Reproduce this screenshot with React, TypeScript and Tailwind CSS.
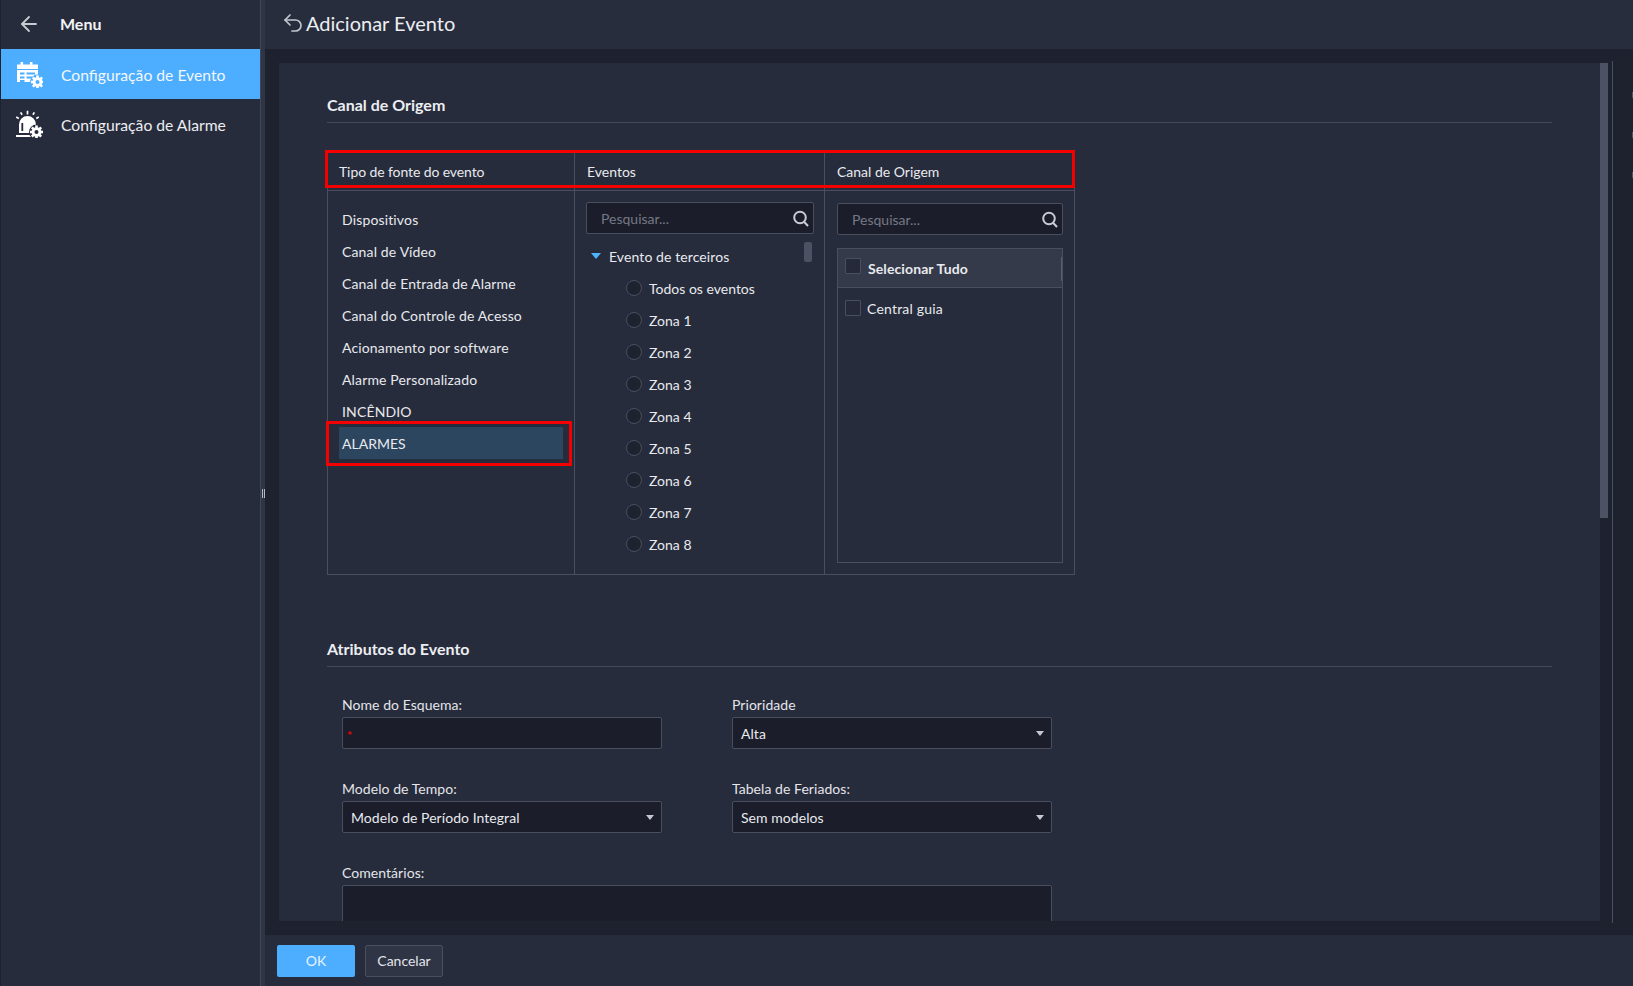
import React from 'react';
import { ArrowLeft, Undo2 } from 'lucide-react';

const sourceTypes = [
  'Dispositivos',
  'Canal de Vídeo',
  'Canal de Entrada de Alarme',
  'Canal do Controle de Acesso',
  'Acionamento por software',
  'Alarme Personalizado',
  'INCÊNDIO',
];

const events = ['Todos os eventos', 'Zona 1', 'Zona 2', 'Zona 3', 'Zona 4', 'Zona 5', 'Zona 6', 'Zona 7', 'Zona 8'];

const Gear = ({ cx, cy, bg }: { cx: number; cy: number; bg: string }) => (
  <g transform={`translate(${cx} ${cy})`}>
    <circle r="7.6" fill={bg} />
    <circle r="4.8" fill="#fff" />
    {[0, 45, 90, 135, 180, 225, 270, 315].map((a) => (
      <rect key={a} x="-1.3" y="-6.6" width="2.6" height="2.8" fill="#fff" transform={`rotate(${a})`} />
    ))}
    <circle r="2" fill={bg} />
  </g>
);

const EventConfigIcon = () => (
  <svg width="28" height="28" viewBox="0 0 28 28">
    <path fill="#fff" d="M2 4.5h3.5V2h2.6v2.5h6.8V2h2.6v2.5H23V9H2z" />
    <path fill="#fff" d="M2 10h21v12H2z" />
    <path fill="#4dadff" d="M5 12.6h4.5v2H5zM11.5 12.6H20v2h-8.5zM5 16.6h4.5v2H5zM11.5 16.6H17v2h-5.5zM5 20h4.5v2H5z" />
    <Gear cx={22.5} cy={22} bg="#4dadff" />
  </svg>
);

const AlarmConfigIcon = () => (
  <svg width="28" height="28" viewBox="0 0 28 28">
    <path fill="#fff" d="M4 23V14.5a8.5 8.5 0 0 1 17 0V23z" />
    <rect x="6.4" y="13" width="1.8" height="8" fill="#272c3c" />
    <rect x="1" y="25" width="16" height="2" fill="#fff" />
    <path stroke="#fff" strokeWidth="1.7" fill="none" d="M12.5 0.8v3.6M5.6 2.4l1.5 2.4M19.4 2.4l-1.5 2.4M1.2 7l2.6 1.4M23.8 7l-2.6 1.4" />
    <Gear cx={21.5} cy={22} bg="#272c3c" />
  </svg>
);

const SearchBox = () => (
  <div className="flex h-[32px] items-center justify-between rounded-[2px] border border-[#4a4f60] bg-[#1b1d2a] pl-[14px] pr-[4px]">
    <span className="text-[14px] text-[#757985]">Pesquisar...</span>
    <svg width="16" height="17" viewBox="0 0 16 17" fill="none" stroke="#c9ccd4" strokeWidth="2">
      <circle cx="7" cy="7.5" r="5.8" />
      <path d="M11 11.8l4 4.2" />
    </svg>
  </div>
);

const Checkbox = () => <span className="block h-[16px] w-[16px] rounded-[1px] border border-[#4a4f60] bg-[#252939]" />;

const Field = ({ label, value, required, select }: { label: string; value?: string; required?: boolean; select?: boolean }) => (
  <div className="flex flex-col">
    <label className="h-[22px] text-[14px] leading-[20px] tracking-[0.05px] text-[#e3e5ea]">{label}</label>
    <div className="flex h-[32px] items-center justify-between rounded-[2px] border border-[#4a4f60] bg-[#1b1d2a] pl-[8px] pr-[7px] text-[14px] tracking-[0.05px] text-[#e8eaee]">
      {required && <span className="-ml-[4px] mt-[6px] text-[12px] font-bold leading-none text-[#f00000]">*</span>}
      {value && <span>{value}</span>}
      {select && <span className="h-0 w-0 border-x-[4px] border-t-[5px] border-x-transparent border-t-[#c4c7d4]" />}
    </div>
  </div>
);

export default function App() {
  return (
    <div
      className="flex h-[986px] w-[1633px] overflow-hidden bg-[#1e222e] text-[#e8eaee]"
      style={{ fontFamily: 'Lato, "Liberation Sans", sans-serif' }}
    >
      {/* side menu */}
      <aside className="ml-[1px] w-[259px] shrink-0 bg-[#272c3c]">
        <div className="flex h-[49px] items-center pb-[1px] pl-[16px]">
          <ArrowLeft size={24} strokeWidth={1.8} className="text-[#c8cad2]" />
          <span className="ml-[19px] text-[16px] font-bold text-[#f2f3f5]">Menu</span>
        </div>
        <div className="flex h-[50px] items-center bg-[#4dadff] pl-[14px] text-[15.7px] text-[#f3f8fd]">
          <EventConfigIcon />
          <span className="ml-[18px] pt-[3px]">Configuração de Evento</span>
        </div>
        <div className="flex h-[50px] items-center pl-[14px] text-[15.7px] text-[#eceef2]">
          <AlarmConfigIcon />
          <span className="ml-[18px] pt-[3px]">Configuração de Alarme</span>
        </div>
      </aside>

      {/* splitter */}
      <div className="flex w-[5px] shrink-0 items-center justify-center gap-[1px] border-l border-[#41465a] bg-[#303546]">
        <span className="h-[9px] w-[1px] bg-[#b5b8c4]" />
        <span className="h-[9px] w-[1px] bg-[#b5b8c4]" />
      </div>

      <main className="flex min-w-0 flex-1 flex-col">
        <header className="flex h-[49px] shrink-0 items-center bg-[#282d3d] pb-[4px] pl-[16px]">
          <Undo2 size={24} strokeWidth={1.7} className="text-[#c3c6cf]" />
          <h1 className="ml-[1px] text-[20px] text-[#eceef2]">Adicionar Evento</h1>
        </header>

        <div className="flex min-h-0 flex-1 pb-[14px] pl-[14px] pt-[14px]">
          <div className="h-full w-[1321px] shrink-0 overflow-hidden bg-[#272c3c] px-[48px] pt-[29px]">
            <h2 className="flex h-[31px] items-center border-b border-[#454a5b] pb-[4px] text-[16px] font-bold text-[#eceef2]">
              Canal de Origem
            </h2>

            <div className="relative mt-[28px] flex h-[424px] w-[748px] border-x border-b border-[#4a4f60]">
              {/* highlight from the annotated capture */}
              <div className="absolute -left-[3px] -right-[1px] -top-[1px] h-[38px] border-[3px] border-[#f40000]" />

              <section className="w-[247px] shrink-0 border-r border-[#4a4f60]">
                <div className="flex h-[40px] items-center border-b border-[#4a4f60] pl-[11px] pt-[1px] text-[14px] tracking-[-0.1px]">Tipo de fonte do evento</div>
                <ul className="pt-[12px] text-[14px] tracking-[0.15px]">
                  {sourceTypes.map((name) => (
                    <li key={name} className="flex h-[32px] items-center pl-[14px]">{name}</li>
                  ))}
                </ul>
                <div className="relative mx-[11px] mt-0 flex h-[32px] items-center bg-[#2d4660] pl-[3px] text-[14px]">
                  <div className="absolute -bottom-[7px] -left-[13px] -right-[9px] -top-[6px] border-[3px] border-[#f40000]" />
                  ALARMES
                </div>
              </section>

              <section className="w-[250px] shrink-0 border-r border-[#4a4f60]">
                <div className="flex h-[40px] items-center border-b border-[#4a4f60] pl-[12px] pt-[1px] text-[14px]">Eventos</div>
                <div className="relative pl-[11px] pr-[10px] pt-[11px]">
                  <SearchBox />
                  <div className="absolute right-[12px] top-[51px] h-[20px] w-[8px] rounded-[2px] bg-[#4c5163]" />
                  <div className="flex h-[32px] items-center pl-[5px] pt-[12px] text-[14px]">
                    <span className="h-0 w-0 border-x-[5.5px] border-t-[6px] border-x-transparent border-t-[#4db5ff]" />
                    <span className="ml-[8px] tracking-[0.1px]">Evento de terceiros</span>
                  </div>
                  <ul className="mt-[6px] text-[14px]">
                    {events.map((name) => (
                      <li key={name} className="flex h-[32px] items-center pl-[40px]">
                        <span className="h-[16px] w-[16px] rounded-full border border-[#4a4f60] bg-[#1f2330]" />
                        <span className="ml-[7px]">{name}</span>
                      </li>
                    ))}
                  </ul>
                </div>
              </section>

              <section className="flex-1">
                <div className="flex h-[40px] items-center border-b border-[#4a4f60] pl-[12px] pt-[1px] text-[14px]">Canal de Origem</div>
                <div className="pl-[12px] pr-[11px] pt-[12px]">
                  <SearchBox />
                  <div className="relative mt-[13px] h-[315px] border border-[#4a4f60]">
                    <div className="flex h-[39px] items-center border-b border-[#4a4f60] bg-[#353a4a] pl-[7px] text-[14px] font-bold tracking-[0.1px]">
                      <span className="-mt-[4px]"><Checkbox /></span>
                      <span className="ml-[7px]">Selecionar Tudo</span>
                    </div>
                    <div className="absolute right-0 top-[8px] h-[24px] w-[1px] bg-[#5a5f70]" />
                    <div className="flex h-[40px] items-center pl-[7px] text-[14px] tracking-[0.2px]">
                      <Checkbox />
                      <span className="ml-[6px]">Central guia</span>
                    </div>
                  </div>
                </div>
              </section>
            </div>

            <h2 className="mt-[61px] flex h-[31px] items-center border-b border-[#454a5b] pb-[4px] text-[16px] font-bold text-[#eceef2]">
              Atributos do Evento
            </h2>

            <div className="ml-[15px] mt-[28px] grid w-[710px] grid-cols-[320px_320px] gap-x-[70px] gap-y-[30px]">
              <Field label="Nome do Esquema:" required />
              <Field label="Prioridade" value="Alta" select />
              <Field label="Modelo de Tempo:" value="Modelo de Período Integral" select />
              <Field label="Tabela de Feriados:" value="Sem modelos" select />
              <div className="col-span-2">
                <label className="block h-[22px] text-[14px] leading-[20px] tracking-[0.05px] text-[#e3e5ea]">Comentários:</label>
                <div className="h-[70px] rounded-[2px] border border-[#4a4f60] bg-[#1b1d2a]" />
              </div>
            </div>
          </div>

          {/* panel scrollbar */}
          <div className="h-[455px] w-[8px] shrink-0 bg-[#4c5163]" />
          <div className="-mt-[2px] ml-[4px] h-[862px] w-[1px] shrink-0 bg-[#4a4f60]" />
          {/* clipped edge of the next pane */}
          <div className="ml-auto flex w-[1px] flex-col gap-[34px] pt-[29px]">
            <span className="h-[6px] w-[1px] bg-[#4c5163]" />
            <span className="h-[6px] w-[1px] bg-[#4c5163]" />
            <span className="h-[6px] w-[1px] bg-[#4c5163]" />
          </div>
        </div>

        <footer className="flex h-[51px] shrink-0 items-center gap-[10px] bg-[#272c3c] pl-[12px]">
          <button className="h-[32px] w-[78px] rounded-[2px] bg-[#4dadff] text-[14px] text-[#e6f3ff]">OK</button>
          <button className="h-[32px] w-[78px] rounded-[2px] border border-[#4a4f60] bg-[#303545] text-[14px] text-[#e3e5ea]">Cancelar</button>
        </footer>
      </main>
    </div>
  );
}
